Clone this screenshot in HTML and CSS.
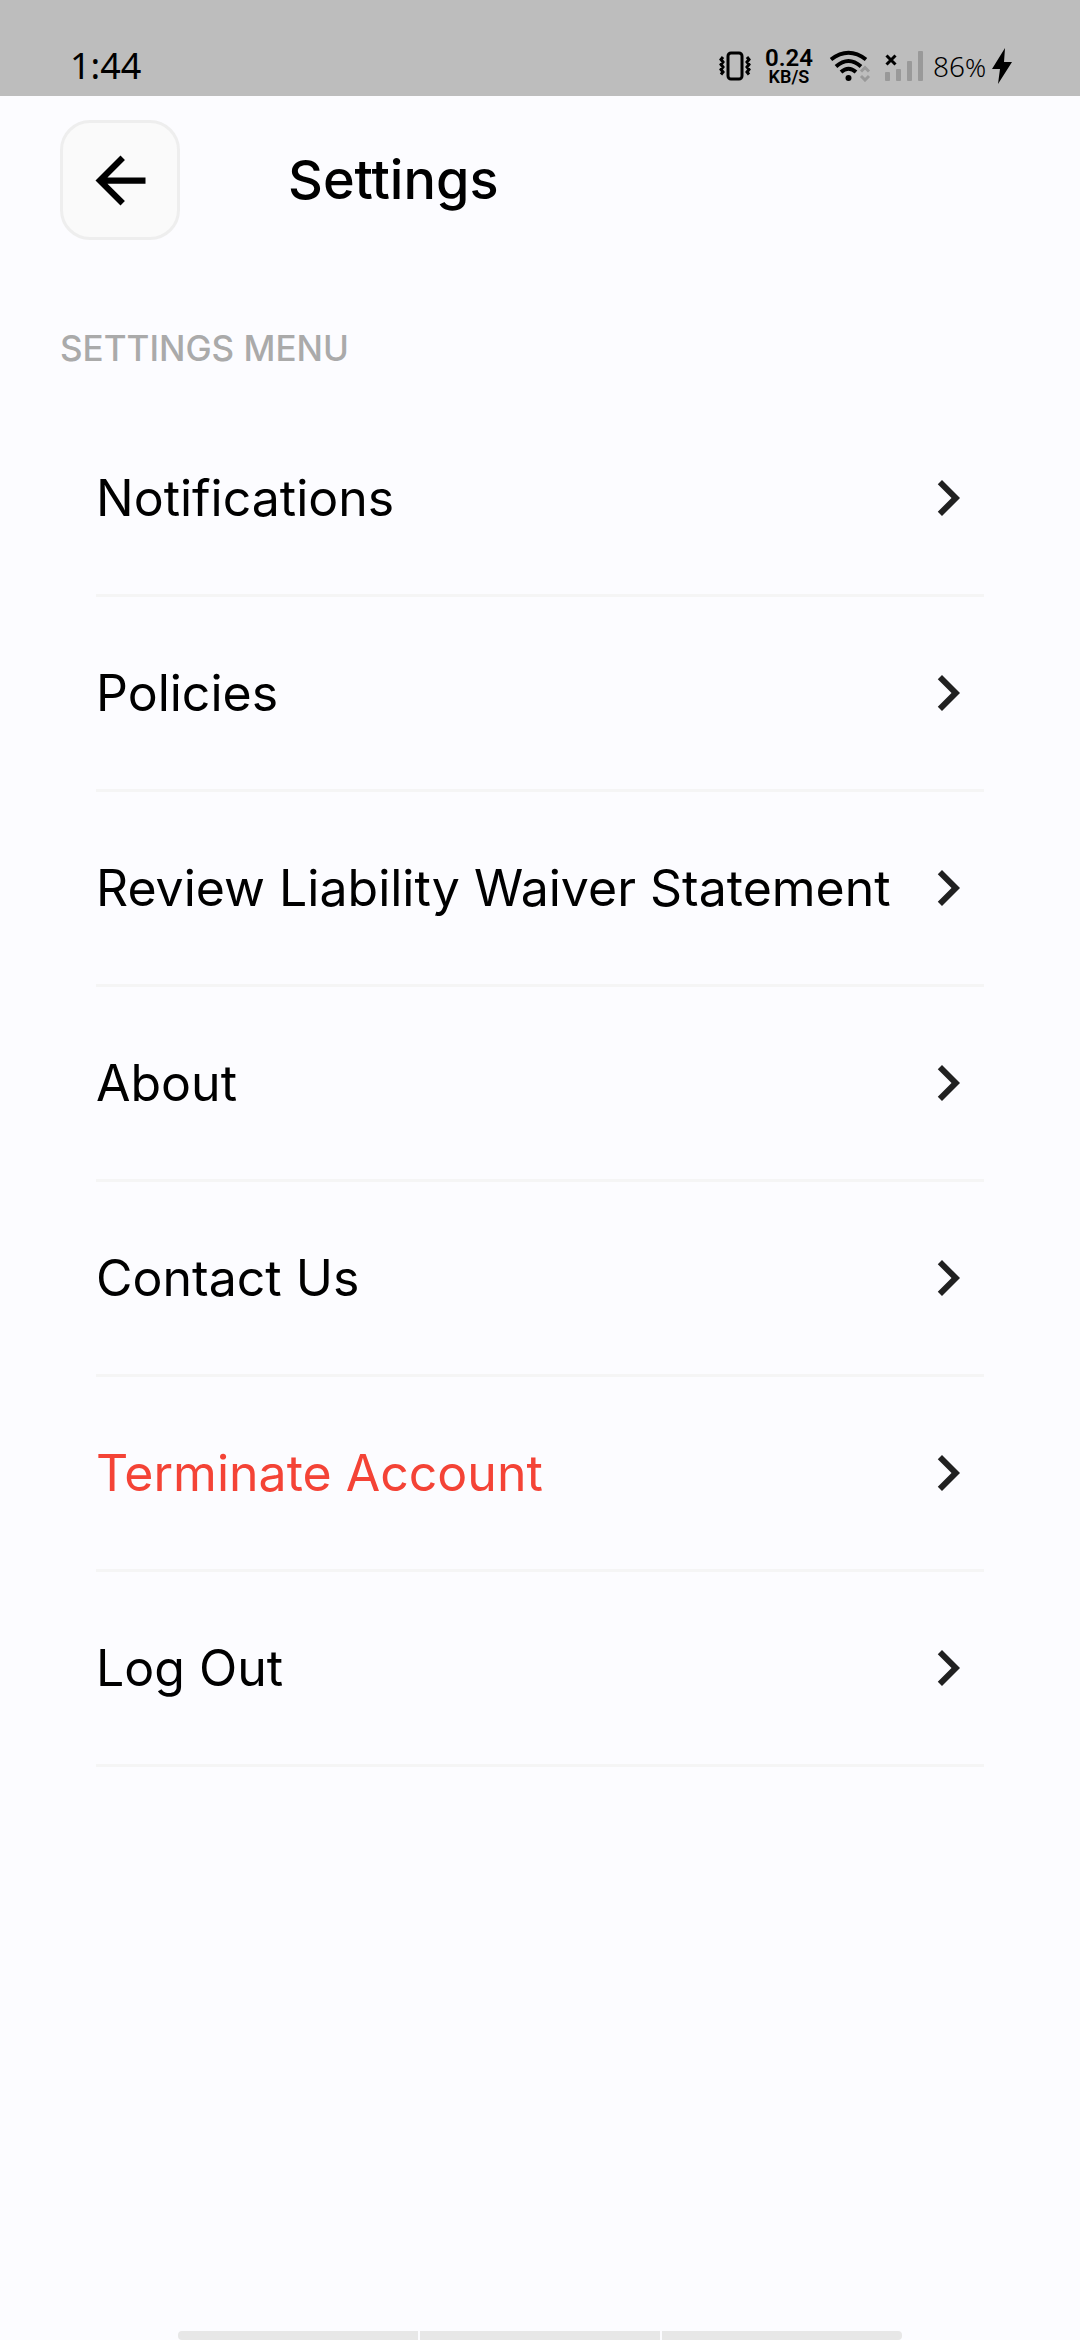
FILE: index.html
```html
<!DOCTYPE html>
<html lang="en">
<head>
  <meta charset="UTF-8" />
  <meta name="viewport" content="width=device-width, initial-scale=1.0"/>
  <title>Settings</title>
  <link rel="stylesheet" href="styles.css">
</head>
<body>

<svg class="defs" aria-hidden="true">
  <symbol id="chevron" viewBox="0 0 24 24">
    <path d="M10 6L8.59 7.41 13.17 12l-4.58 4.59L10 18l6-6z"/>
  </symbol>
</svg>

<div class="status-bar">
  <span class="time">1:44</span>
  <div class="status-icons">
    <svg class="vibrate" viewBox="0 0 32 30" aria-hidden="true">
      <rect x="9" y="2" width="14" height="26" rx="3"/>
      <path d="M4 6l-2 2.500 2 2.500-2 2.500 2 2.500-2 2.500 2 2.500-2 2.500M28 6l2 2.500-2 2.500 2 2.500-2 2.500 2 2.500-2 2.500 2 2.500"/>
    </svg>
    <div class="speed">
      <span class="speed-value">0.24</span>
      <span class="speed-unit">KB/S</span>
    </div>
    <svg class="wifi" viewBox="0 0 42 32" aria-hidden="true">
      <path d="M2 9.500Q19.500-4 37 9.500M7 16.500Q19.500 5.500 32 16.500M12 22Q19.500 15.500 27 22"/>
      <circle cx="19.500" cy="28" r="3"/>
      <path class="dim" d="M32 21.500l4-4 4 4M32 26l4 4 4-4"/>
    </svg>
    <svg class="signal" viewBox="0 0 38 30" aria-hidden="true">
      <rect x="0" y="21" width="5" height="9" rx="1"/>
      <rect x="11" y="18" width="5" height="12" rx="1"/>
      <rect x="22" y="10" width="5" height="20" rx="1"/>
      <rect x="33" y="0" width="5" height="30" rx="1"/>
      <path d="M1.500 4.500l9 9M10.500 4.500l-9 9"/>
    </svg>
    <span class="battery">86<small>%</small></span>
    <svg class="bolt" viewBox="0 0 20 36" aria-hidden="true">
      <path d="M13 0L0 21h8L6 36 20 14h-8z"/>
    </svg>
  </div>
</div>

<header class="header">
  <button class="back" aria-label="Back">
    <svg viewBox="0 0 24 24" aria-hidden="true">
      <path d="M20 11H7.830l5.590-5.590L12 4l-8 8 8 8 1.410-1.410L7.830 13H20z"/>
    </svg>
  </button>
  <h1>Settings</h1>
</header>

<main class="content">
  <h2>SETTINGS MENU</h2>
  <nav class="menu">
    <a href="#notifications">Notifications <svg aria-hidden="true"><use href="#chevron"/></svg></a>
    <a href="#policies">Policies <svg aria-hidden="true"><use href="#chevron"/></svg></a>
    <a href="#waiver">Review Liability Waiver Statement <svg aria-hidden="true"><use href="#chevron"/></svg></a>
    <a href="#about">About <svg aria-hidden="true"><use href="#chevron"/></svg></a>
    <a href="#contact">Contact Us <svg aria-hidden="true"><use href="#chevron"/></svg></a>
    <a href="#terminate" class="danger">Terminate Account <svg aria-hidden="true"><use href="#chevron"/></svg></a>
    <a href="#logout">Log Out <svg aria-hidden="true"><use href="#chevron"/></svg></a>
  </nav>
</main>

<div class="nav-hints">
  <span></span>
  <span></span>
  <span></span>
</div>

</body>
</html>
```
FILE: styles.css
```css
* {
  box-sizing: border-box;
}

body {
  margin: 0;
  min-height: 100vh;
  display: flex;
  flex-direction: column;
  font-family: Inter, sans-serif;
  background: #fcfcff;
  color: #000;
}

.defs {
  display: none;
}

/* status bar */
.status-bar {
  display: flex;
  justify-content: space-between;
  align-items: center;
  height: 96px;
  padding: 36px 68px 0 70px;
  background: #bdbdbd;
}

.time {
  font-family: "Noto Sans", sans-serif;
  font-size: 36px;
  line-height: 60px;
}

.status-icons {
  display: flex;
  align-items: center;
}

.vibrate {
  width: 32px;
  height: 30px;
  margin-right: 14px;
  fill: none;
  stroke: #000;
  stroke-width: 3;
}

.speed {
  display: flex;
  flex-direction: column;
  align-items: center;
  margin-right: 16px;
  font-family: Roboto, sans-serif;
  font-weight: 600;
}

.speed-value {
  font-size: 24px;
  line-height: 22px;
}

.speed-unit {
  font-size: 18px;
  line-height: 16px;
}

.wifi {
  width: 42px;
  height: 32px;
  margin-right: 14px;
}

.wifi path {
  fill: none;
  stroke: #000;
  stroke-width: 4;
}

.wifi .dim {
  stroke: #999;
  stroke-width: 3;
}

.signal {
  width: 38px;
  height: 30px;
  margin-right: 10px;
  fill: #999;
}

.signal path {
  stroke: #000;
  stroke-width: 3;
}

.battery {
  margin-right: 6px;
  font-family: "Noto Sans", sans-serif;
  font-size: 28px;
  font-weight: 300;
  line-height: 60px;
}

.battery small {
  font-size: 26px;
}

.bolt {
  width: 20px;
  height: 36px;
}

/* title row */
.header {
  display: flex;
  align-items: center;
  gap: 108px;
  padding: 24px 60px;
}

.back {
  display: flex;
  align-items: center;
  justify-content: center;
  width: 120px;
  height: 120px;
  padding: 0;
  border: 3px solid #eee;
  border-radius: 30px;
  background: #fafafa;
}

.back svg {
  flex: none;
  width: 75px;
  height: 75px;
}

h1 {
  margin: 0;
  font-size: 54px;
  font-weight: 500;
  line-height: 72px;
}

.content {
  flex: 1;
  padding: 60px 60px 0;
}

h2 {
  margin: 0 0 30px;
  font-size: 35px;
  font-weight: 500;
  line-height: 48px;
  color: #aaa;
}

/* menu list */
.menu {
  padding: 0 36px;
}

.menu a {
  display: flex;
  align-items: center;
  justify-content: space-between;
  height: 195px;
  border-bottom: 3px solid #f5f5f5;
  font-size: 50px;
  font-weight: 400;
  line-height: 72px;
  color: #000;
  text-decoration: none;
}

.menu .danger {
  color: #f44336;
}

.menu svg {
  flex: none;
  width: 72px;
  height: 72px;
  fill: #212121;
}

/* gesture hints at the bottom edge */
.nav-hints {
  display: flex;
  gap: 2px;
  width: 67%;
  height: 9px;
  margin: 0 auto;
  border-radius: 4px;
  overflow: hidden;
}

.nav-hints span {
  flex: 1;
  background: #e7e7e7;
}
```
